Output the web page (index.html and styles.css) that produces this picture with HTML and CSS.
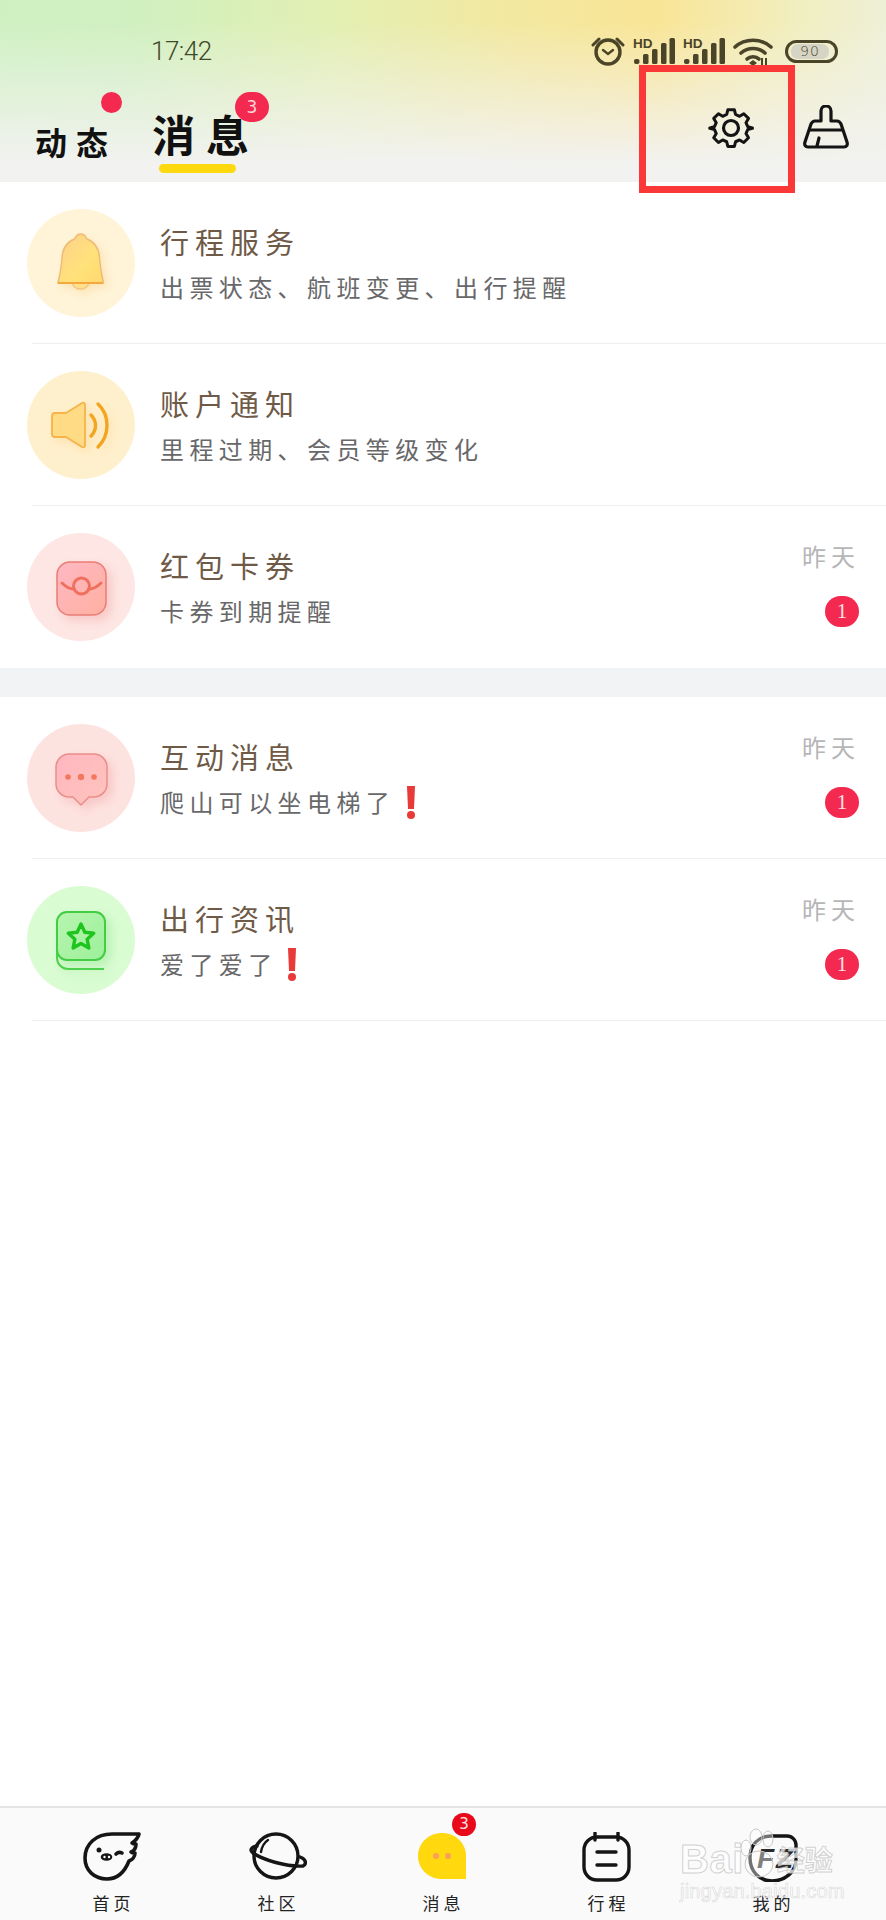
FILE: index.html
```html
<!DOCTYPE html>
<html lang="zh-CN">
<head>
<meta charset="utf-8">
<title>消息</title>
<link rel="stylesheet" href="styles.css">
</head>
<body>
<div class="page">
  <header class="top">
    <div class="status">
      <span class="time">17:42</span>
      <div class="status-icons">
        <svg class="ic-alarm" width="34" height="30" viewBox="0 0 34 30"><g fill="none" stroke="#4a4428"><circle cx="17" cy="16" r="12" stroke-width="3.4"/><path d="M2 9 8 3M32 9 26 3" stroke-width="3" stroke-linecap="round"/><path d="M12 14l5 4 5-4" stroke-width="2.4" stroke-linecap="round"/></g></svg>
        <svg width="42" height="32" viewBox="0 -3 42 32"><text class="hd" x="0" y="10">HD</text><g fill="#4a4428"><rect x="1" y="21" width="5.500" height="5" rx="2"/><rect x="10" y="16" width="5.500" height="10" rx="1.500"/><rect x="19" y="11" width="5.500" height="15" rx="1.500"/><rect x="28" y="5" width="5.500" height="21" rx="1.500"/><rect x="36.500" y="0" width="5.500" height="26" rx="1.500"/></g></svg>
        <svg width="42" height="32" viewBox="0 -3 42 32"><text class="hd" x="0" y="10">HD</text><g fill="#4a4428"><rect x="1" y="21" width="5.500" height="5" rx="2"/><rect x="10" y="16" width="5.500" height="10" rx="1.500"/><rect x="19" y="11" width="5.500" height="15" rx="1.500"/><rect x="28" y="5" width="5.500" height="21" rx="1.500"/><rect x="36.500" y="0" width="5.500" height="26" rx="1.500"/></g></svg>
        <svg width="40" height="29" viewBox="0 0 40 29"><g fill="none" stroke="#4a4428" stroke-width="3.6" stroke-linecap="round"><path d="M2 10C12 1 28 1 38 10"/><path d="M8 16C15 10 25 10 32 16"/><path d="M14 22C17 19 23 19 26 22"/></g><path d="M16 26l4-3 4 3-4 3z" fill="#4a4428"/><path d="M29 21v8M33 21v8" stroke="#4a4428" stroke-width="2"/></svg>
        <span class="battery"><span class="battery-level">90</span></span>
      </div>
    </div>
    <div class="tabs">
      <div class="tab tab-muted">动态<span class="dot"></span></div>
      <div class="tab tab-active">
        <span class="tab-label">消息<span class="count">3</span></span>
        <span class="underline"></span>
      </div>
      <div class="tools">
        <svg width="46" height="46" viewBox="0 0 46 46"><g fill="none" stroke="#141414" stroke-width="3.2" stroke-linejoin="round"><path d="M19.5 3.5h7l1.2 5 4.3 1.900 4.500-2.700 5 5-2.700 4.500 1.900 4.300 5 1.200v.6l-5 1.200-1.900 4.300 2.700 4.500-5 5-4.500-2.700-4.300 1.900-1.200 5h-7l-1.200-5-4.300-1.900-4.500 2.700-5-5 2.700-4.500-1.900-4.300-5-1.200v-.6l5-1.200 1.900-4.300-2.700-4.500 5-5 4.500 2.700 4.300-1.900z" transform="translate(1.500 1.500) scale(.94)"/><circle cx="23" cy="23" r="7.500"/></g></svg>
        <svg width="46" height="44" viewBox="0 0 46 44"><g fill="none" stroke="#141414" stroke-width="3.2" stroke-linejoin="round" stroke-linecap="round"><path d="M18 16V6a5 5 0 0 1 10 0v10h6c2 0 3 1 4 3l6 18c1 3-.5 5-3 5H5c-2.500 0-4-2-3-5l6-18c1-2 2-3 4-3z"/><path d="M7 25h32M14 41l2-8"/></g></svg>
      </div>
    </div>
    <div class="mark"></div>
  </header>

  <main>
    <section class="group">
      <div class="row">
        <svg class="pic" width="108" height="108" viewBox="0 0 108 108"><defs><linearGradient id="gBell" x1="0" y1="0" x2="1" y2="1"><stop offset="0" stop-color="#fdd08e"/><stop offset=".6" stop-color="#ffe27a"/><stop offset="1" stop-color="#ffd96e"/></linearGradient></defs><circle cx="54" cy="54" r="54" fill="#fff4d8"/><g class="shade-y"><path d="M45 74a9 9 0 0 0 17 0z" fill="#ffe08c" stroke="#f3c780" stroke-width="1.500"/><path d="M53.500 25c3 0 5 2 6.500 5 8 3 12 9 12.500 19 .5 9 2 16 4 25H31c2-9 3.500-16 4-25 .5-10 4.500-16 12.500-19 1.500-3 3-5 6-5z" fill="url(#gBell)" stroke="#efbb78" stroke-width="1.500" stroke-linejoin="round"/><path d="M31 74h45" stroke="#f5a83c" stroke-width="2"/></g></svg>
        <div class="text"><div class="title">行程服务</div><div class="sub">出票状态、航班变更、出行提醒</div></div>
      </div>
      <div class="row">
        <svg class="pic" width="108" height="108" viewBox="0 0 108 108"><circle cx="54" cy="54" r="54" fill="#fff0cd"/><g class="shade-y"><path d="M28 42h11l16-10c2-1 3 0 3 2v40c0 2-1 3-3 2L39 66H28c-2 0-3-1-3-3V45c0-2 1-3 3-3z" fill="#ffdb86" stroke="#f5b34a" stroke-width="1.800" stroke-linejoin="round"/><g fill="none" stroke="#f3a520" stroke-width="3.400" stroke-linecap="round"><path d="M64 44c6 6 6 15 0 21"/><path d="M71 33c12 11 12 31 0 43"/></g></g></svg>
        <div class="text"><div class="title">账户通知</div><div class="sub">里程过期、会员等级变化</div></div>
      </div>
      <div class="row row-last">
        <svg class="pic" width="108" height="108" viewBox="0 0 108 108"><defs><linearGradient id="gPack" x1="0" y1="0" x2="1" y2="1"><stop offset="0" stop-color="#ffb8c4"/><stop offset="1" stop-color="#ffb0a0"/></linearGradient></defs><circle cx="54" cy="54" r="54" fill="#fde6e3"/><g class="shade-r"><rect x="30" y="29" width="49" height="53" rx="13" fill="url(#gPack)" stroke="#ea7d76" stroke-width="1.500"/><g fill="none" stroke="#f0705f" stroke-width="3" stroke-linecap="round"><path d="M35 50c4 4 8 6 12 6M62 56c4 0 8-2 12-6"/><circle cx="54.500" cy="53" r="8"/></g></g></svg>
        <div class="text"><div class="title">红包卡券</div><div class="sub">卡券到期提醒</div></div>
        <div class="meta"><span class="when">昨天</span><span class="num">1</span></div>
      </div>
    </section>

    <section class="group group-second">
      <div class="row">
        <svg class="pic" width="108" height="108" viewBox="0 0 108 108"><defs><linearGradient id="gChat" x1="0" y1="0" x2="1" y2="1"><stop offset="0" stop-color="#ffb6c0"/><stop offset="1" stop-color="#ffc4bc"/></linearGradient></defs><circle cx="54" cy="54" r="54" fill="#fde3e0"/><g class="shade-r"><path d="M42 30h25c7 0 13 6 13 13v17c0 7-6 13-13 13h-5l-8 8-8-8h-4c-7 0-13-6-13-13V43c0-7 6-13 13-13z" fill="url(#gChat)" stroke="#e98f8a" stroke-width="1.500" stroke-linejoin="round"/><g fill="#f2785f"><circle cx="41" cy="53" r="2.800"/><circle cx="54" cy="53" r="3.200"/><circle cx="67" cy="53" r="2.800"/></g></g></svg>
        <div class="text"><div class="title">互动消息</div><div class="sub">爬山可以坐电梯了<svg class="bang bang-long" width="8" height="33" viewBox="0 0 8 33"><path d="M0 0h8l-1 23H1z" fill="#e93a3a"/><circle cx="4" cy="29" r="4" fill="#e93a3a"/></svg></div></div>
        <div class="meta"><span class="when">昨天</span><span class="num">1</span></div>
      </div>
      <div class="row">
        <svg class="pic" width="108" height="108" viewBox="0 0 108 108"><defs><linearGradient id="gBook" x1="0" y1="0" x2="1" y2="1"><stop offset="0" stop-color="#b8f5b0"/><stop offset="1" stop-color="#9cf09a"/></linearGradient></defs><circle cx="54" cy="54" r="54" fill="#dafcd3"/><g class="shade-g"><path d="M30 64v8c0 6 5 11 11 11h36" fill="none" stroke="#4ed14c" stroke-width="2"/><rect x="30" y="26" width="48" height="48" rx="10" fill="url(#gBook)" stroke="#45cc45" stroke-width="2"/><path d="M54 38l3.800 8.200 8.900 1-6.600 6 1.800 8.800-7.900-4.500-7.900 4.500 1.800-8.800-6.600-6 8.900-1z" fill="none" stroke="#1fc41f" stroke-width="3.400" stroke-linejoin="round"/></g></svg>
        <div class="text"><div class="title">出行资讯</div><div class="sub">爱了爱了<svg class="bang" width="8" height="33" viewBox="0 0 8 33"><path d="M0 0h8l-1 23H1z" fill="#e93a3a"/><circle cx="4" cy="29" r="4" fill="#e93a3a"/></svg></div></div>
        <div class="meta"><span class="when">昨天</span><span class="num">1</span></div>
      </div>
    </section>
  </main>

  <nav class="bar">
    <div class="item">
      <svg width="60" height="50" viewBox="0 0 60 50"><g fill="none" stroke="#151515" stroke-width="3.600" stroke-linejoin="round" stroke-linecap="round"><path d="M57 2H30C14 2 3 12 3 26c0 13 10 21 22 21 12 0 18-8 22-18 3-1 6-4 6-8-1 0-3 0-4-1 3-1 5-4 5-8-1 0-3 0-4-1 3-2 6-5 7-9z"/><path d="M34 22c2-2 4-2 6-1"/></g><circle cx="17" cy="18" r="2.500" fill="#151515"/><ellipse cx="24.500" cy="25" rx="5.800" ry="3.800" fill="#151515"/><circle cx="22.500" cy="25" r="1.200" fill="#fff"/><circle cx="27" cy="25" r="1.200" fill="#fff"/></svg>
      <span class="label">首页</span>
    </div>
    <div class="item">
      <svg width="60" height="50" viewBox="0 0 60 50"><g fill="none" stroke="#151515" stroke-width="3.400" stroke-linecap="round"><circle cx="29" cy="24" r="22"/><path d="M10 14C3 15 3 19 6 21c10 7 34 14 50 13 4-2 3-7-3-9"/><path d="M14 20C15 14 18 10 21 8" stroke-width="2.400"/></g></svg>
      <span class="label">社区</span>
    </div>
    <div class="item">
      <svg width="60" height="50" viewBox="0 0 60 50"><path d="M30 1C16.500 1 6 11 6 24s10.500 23 24 23h24V24C54 11 43.500 1 30 1z" fill="#ffd80e"/><circle cx="24" cy="24" r="3" fill="#f8a05a"/><circle cx="36" cy="24" r="3" fill="#f8a05a"/></svg>
      <span class="num num-tab">3</span>
      <span class="label">消息</span>
    </div>
    <div class="item">
      <svg width="60" height="50" viewBox="0 0 60 50"><g fill="none" stroke="#151515" stroke-width="3.400" stroke-linecap="round"><rect x="7" y="5" width="45" height="43" rx="13"/><path d="M18 1v7M41 1v7M20 20h19M20 33h19"/></g></svg>
      <span class="label">行程</span>
    </div>
    <div class="item">
      <svg width="60" height="50" viewBox="0 0 60 50"><path d="M29 4h16c5 0 9 4 9 9v14C54 40 43 49 30 49S8 39 8 26 16 4 29 4z" fill="none" stroke="#151515" stroke-width="3.400"/><text class="fz" x="15" y="36">FZ</text></svg>
      <span class="label">我的</span>
    </div>
    <div class="watermark">
      <div class="wm-top"><span class="wm-bai">Bai</span><svg class="wm-paw" width="40" height="52" viewBox="0 0 40 52"><g fill="#fff" fill-opacity=".4" stroke="#c8c8c8" stroke-width="1"><ellipse cx="7" cy="20" rx="5" ry="8"/><ellipse cx="17" cy="9" rx="6" ry="8"/><ellipse cx="29" cy="11" rx="5" ry="8"/><ellipse cx="20" cy="36" rx="14" ry="13"/></g></svg><span class="wm-cn">经验</span></div>
      <div class="wm-url">jingyan.baidu.com</div>
    </div>
  </nav>
</div>
</body>
</html>
```

FILE: styles.css
```css
* { box-sizing: border-box; }
html, body { margin: 0; padding: 0; }
body {
  background: #fff;
  font-family: "Noto Sans CJK SC", "Noto Sans", sans-serif;
}
.page {
  width: 886px;
  height: 1920px;
  display: flex;
  flex-direction: column;
  overflow: hidden;
  position: relative;
}
.top {
  height: 182px;
  flex: none;
  padding-top: 36px;
  position: relative;
  background:
    linear-gradient(to bottom, rgba(242,242,240,0) 12%, rgba(242,242,240,.62) 60%, #f2f2f0 90%),
    linear-gradient(to right, #cff1c2 0%, #d0f0c0 15%, #e3efb2 38%, #f3e8a0 58%, #f9e596 74%, #f1eebf 90%, #eef0d6 100%);
}
.status {
  height: 30px;
  display: flex;
  align-items: center;
  padding: 0 48px 0 151px;
}
.time {
  font-family: Roboto, sans-serif;
  font-weight: 300;
  font-size: 26px;
  letter-spacing: -.5px;
  color: #3f4a2a;
}
.status-icons {
  margin-left: auto;
  display: flex;
  align-items: center;
  gap: 8px;
}
.hd {
  font-family: "Liberation Sans", sans-serif;
  font-size: 13.5px;
  font-weight: 700;
  fill: #4a4428;
}
.battery {
  width: 53px;
  height: 23px;
  margin-left: 4px;
  border: 3px solid #4a4428;
  border-radius: 12px;
  padding: 1px 3px 1px 3px;
  display: block;
}
.battery-level {
  display: block;
  width: 38px;
  height: 15px;
  line-height: 15px;
  border-radius: 7px;
  background: #d6d4c4;
  text-align: center;
  font-family: "DejaVu Sans", sans-serif;
  font-weight: 200;
  font-size: 14px;
  letter-spacing: 1px;
  color: #4a4428;
}
.tabs {
  display: flex;
  align-items: flex-start;
  padding-left: 35px;
}
.tab { position: relative; color: #111; font-weight: 700; }
.tab-muted {
  margin-top: 55px;
  font-size: 32px;
  line-height: 40px;
  letter-spacing: 9px;
}
.dot {
  position: absolute;
  left: 66px;
  top: -29px;
  width: 21px;
  height: 21px;
  border-radius: 50%;
  background: #f4294f;
}
.tab-active {
  margin: 42px 0 0 35px;
  display: flex;
  flex-direction: column;
}
.tab-label {
  position: relative;
  font-size: 43px;
  line-height: 50px;
  letter-spacing: 11px;
  height: 50px;
}
.count {
  position: absolute;
  left: 83px;
  top: -16px;
  width: 34px;
  height: 30px;
  border-radius: 15px;
  background: #f4294f;
  color: #ffd5dc;
  font: 400 17px/30px "DejaVu Sans", sans-serif;
  letter-spacing: 0;
  text-align: center;
}
.underline {
  width: 77px;
  height: 9px;
  margin: 6px 0 0 7px;
  border-radius: 5px;
  background: #ffd90f;
}
.tools {
  margin: 39px 0 0 auto;
  padding-right: 37px;
  display: flex;
  align-items: flex-start;
  gap: 49px;
}
.mark {
  position: absolute;
  left: 639px;
  top: 65px;
  width: 156px;
  height: 128px;
  border: 7px solid #fb3838;
  z-index: 2;
}
main { flex: 1; }
.group-second {
  border-top: 29px solid #f2f3f5;
}
.row {
  height: 162px;
  margin-left: 32px;
  display: flex;
  border-bottom: 1px solid #eeeeef;
  position: relative;
}
.row-last { border-bottom: 0; }
.pic {
  flex: none;
  margin: 27px 0 0 -5px;
  filter: blur(.4px);
}
.shade-y { filter: drop-shadow(4px 4px 4px rgba(250, 200, 120, .35)); }
.shade-r { filter: drop-shadow(5px 5px 5px rgba(240, 150, 150, .35)); }
.shade-g { filter: drop-shadow(5px 5px 5px rgba(110, 220, 110, .3)); }
.text {
  margin-left: 25px;
  padding-top: 39px;
  display: flex;
  flex-direction: column;
  gap: 9px;
}
.title {
  font-size: 29px;
  line-height: 40px;
  letter-spacing: 6px;
  color: #6f5a47;
  font-weight: 400;
}
.sub {
  font-size: 24px;
  line-height: 34px;
  letter-spacing: 5.400px;
  color: #68686a;
  display: flex;
  align-items: center;
}
.bang { margin-left: 10px; }
.bang-long { margin-left: 12px; }
.meta {
  margin-left: auto;
  padding: 33px 27px 0 0;
  display: flex;
  flex-direction: column;
  align-items: flex-end;
}
.when {
  font-size: 24px;
  line-height: 34px;
  letter-spacing: 5px;
  margin-right: -1px;
  color: #b6b6b6;
}
.num {
  margin-top: 23px;
  width: 34px;
  height: 31px;
  border-radius: 16px;
  background: #f4294f;
  color: #ffe3e8;
  font: 400 21px/31px "Liberation Serif", serif;
  text-align: center;
}
.bar {
  height: 114px;
  flex: none;
  position: relative;
  background: #fafafa;
  border-top: 2px solid #e4e4e4;
  padding: 24px 32px 0 29px;
  display: grid;
  grid-template-columns: repeat(5, 1fr);
}
.item {
  position: relative;
  display: flex;
  flex-direction: column;
  align-items: center;
}
.label {
  margin-top: 8px;
  font-size: 17px;
  line-height: 26px;
  letter-spacing: 4px;
  margin-right: -4px;
  color: #222;
}
.num-tab {
  position: absolute;
  left: 93px;
  top: -19px;
  margin: 0;
  width: 24px;
  height: 23px;
  background: #e8091a;
  color: #ffe3e3;
  font: 400 15px/23px "DejaVu Sans", sans-serif;
}
.fz {
  font-family: "Liberation Sans", sans-serif;
  font-size: 28px;
  font-weight: 700;
  font-style: italic;
  letter-spacing: 2px;
  fill: #2a2a2a;
}
.watermark {
  position: absolute;
  left: 680px;
  top: 18px;
  width: 170px;
  z-index: 3;
}
.wm-top {
  display: flex;
  align-items: flex-end;
  height: 54px;
}
.wm-bai, .wm-cn {
  font-family: "Liberation Sans", sans-serif;
  font-weight: 700;
  color: rgba(255,255,255,.72);
  -webkit-text-stroke: 1px rgba(195,195,195,.75);
  line-height: 42px;
}
.wm-bai { font-size: 40px; letter-spacing: .5px; }
.wm-cn { font-family: "Noto Sans CJK SC", sans-serif; font-size: 28px; letter-spacing: 0; margin-left: -2px; }
.wm-paw { margin-left: -5px; flex: none; }
.wm-url {
  font-family: "Liberation Sans", sans-serif;
  font-size: 20px;
  line-height: 22px;
  color: rgba(255,255,255,.75);
  -webkit-text-stroke: .6px rgba(200,200,200,.7);
  letter-spacing: .2px;
}
```
